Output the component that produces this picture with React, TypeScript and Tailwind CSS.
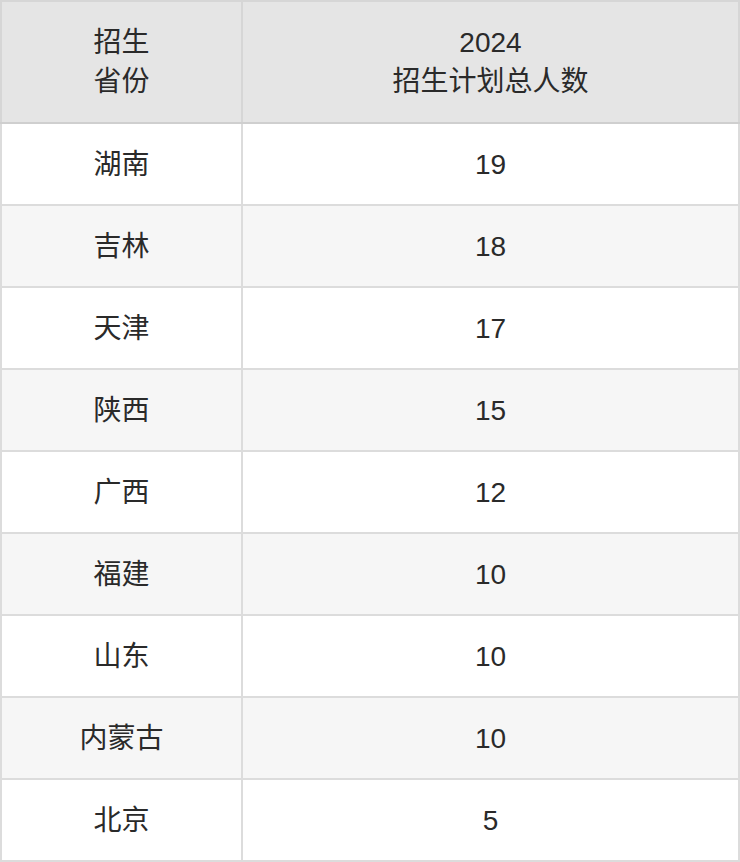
import React from 'react';

const rows: [string, string][] = [
  ['湖南', '19'],
  ['吉林', '18'],
  ['天津', '17'],
  ['陕西', '15'],
  ['广西', '12'],
  ['福建', '10'],
  ['山东', '10'],
  ['内蒙古', '10'],
  ['北京', '5'],
];

export default function App() {
  return (
    <div className="w-[740px] bg-white font-['Liberation_Sans','Noto_Sans_CJK_SC',sans-serif] text-[28px] leading-[39px] text-[#2a2a2a]">
      <table className="w-full border-collapse border-2 border-[#d6d6d6] text-center">
        <thead>
          <tr className="bg-[#e5e5e5]">
            <th className="h-[122px] w-[241px] border-2 border-[#d6d6d6] border-b-[#cfcfcf] font-normal">
              招生
              <br />
              省份
            </th>
            <th className="h-[122px] border-2 border-[#d6d6d6] border-b-[#cfcfcf] font-normal">
              2024
              <br />
              招生计划总人数
            </th>
          </tr>
        </thead>
        <tbody>
          {rows.map(([province, count], i) => (
            <tr key={province} className={i % 2 === 1 ? 'bg-[#f6f6f6]' : 'bg-white'}>
              <td className="h-[82px] border-2 border-[#dcdcdc]">{province}</td>
              <td className="h-[82px] border-2 border-[#dcdcdc]">{count}</td>
            </tr>
          ))}
        </tbody>
      </table>
    </div>
  );
}
